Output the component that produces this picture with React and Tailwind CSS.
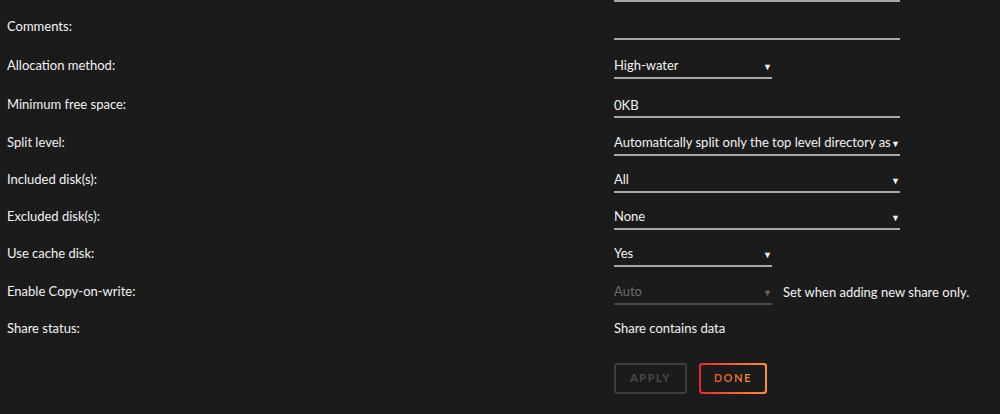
import React from 'react'

const font = { fontFamily: 'Lato, "Open Sans", "Liberation Sans", sans-serif' }

function Arrow({ dim }) {
  return (
    <span className={`shrink-0 text-[9px] leading-none ${dim ? 'text-[#666]' : 'text-[#f2f2f2]'}`}>▼</span>
  )
}

function Select({ value, wide, dim }) {
  return (
    <div
      className={`flex items-center justify-between pb-[2px] h-[22px] border-b-2 ${wide ? 'w-[286px]' : 'w-[158px]'} ${dim ? 'border-[#4a4a4a] border-b' : 'border-[#a8a8a8]'}`}
    >
      <span className={`overflow-hidden whitespace-nowrap ${dim ? 'text-[#6b6b6b]' : ''}`}>{value}</span>
      <Arrow dim={dim} />
    </div>
  )
}

function Row({ label, h, children }) {
  return (
    <div className={`flex items-end ${h}`}>
      <div className="w-[607px] pb-[4px]">{label}</div>
      <div className="flex items-end">{children}</div>
    </div>
  )
}

export default function App() {
  return (
    <div className="w-[1000px] h-[414px] overflow-hidden bg-[#1c1b1b] text-[#f2f2f2] text-[13px] pl-[7px]" style={font}>
      <div className="ml-[607px] w-[286px] h-[2px] bg-[#a8a8a8]" />

      <Row label="Comments:" h="h-[38px]">
        <div className="w-[286px] h-[22px] border-b-2 border-[#a8a8a8]" />
      </Row>
      <Row label="Allocation method:" h="h-[39px]">
        <Select value="High-water" />
      </Row>
      <Row label="Minimum free space:" h="h-[39px]">
        <div className="w-[286px] h-[22px] pb-[2px] border-b-2 border-[#a8a8a8]">0KB</div>
      </Row>
      <Row label="Split level:" h="h-[38px]">
        <Select wide value="Automatically split only the top level directory as required" />
      </Row>
      <Row label="Included disk(s):" h="h-[37px]">
        <Select wide value="All" />
      </Row>
      <Row label="Excluded disk(s):" h="h-[37px]">
        <Select wide value="None" />
      </Row>
      <Row label="Use cache disk:" h="h-[37px]">
        <Select value="Yes" />
      </Row>
      <Row label="Enable Copy-on-write:" h="h-[38px]">
        <Select dim value="Auto" />
        <span className="ml-[11px] pb-[3px]">Set when adding new share only.</span>
      </Row>

      <div className="flex h-[33px] items-end">
        <div className="w-[607px]">Share status:</div>
        <div>Share contains data</div>
      </div>

      <div className="ml-[607px] mt-[25px] flex gap-[12px]">
        <button className="w-[73px] h-[31px] rounded-[3px] border-2 border-[#3e3e3e] text-[11px] font-bold tracking-[1.5px] text-[#4a4a4a]">
          APPLY
        </button>
        <div className="w-[68px] h-[31px] rounded-[3px] p-[2px] bg-linear-to-r from-[#e22828] to-[#ff8c2f]">
          <button className="w-full h-full rounded-[2px] bg-[#1c1b1b] text-[11px] font-bold tracking-[1.5px]">
            <span className="bg-linear-to-r from-[#e85a1e] to-[#ff8c2f] bg-clip-text text-transparent">DONE</span>
          </button>
        </div>
      </div>
    </div>
  )
}
